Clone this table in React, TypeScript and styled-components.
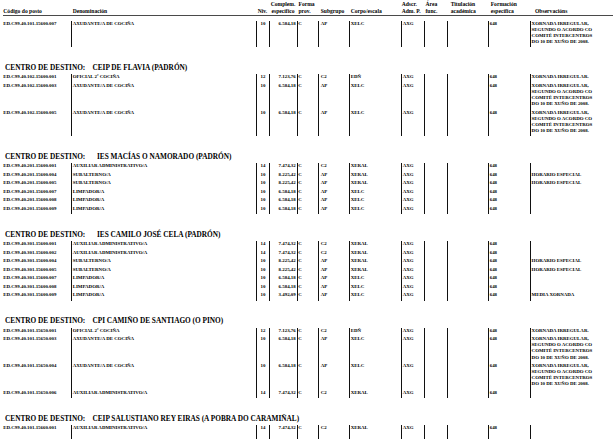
import React from "react";
import styled, { createGlobalStyle } from "styled-components";

const Global = createGlobalStyle`
  html, body { margin: 0; padding: 0; background: #fff; }
  body {
    width: 615px;
    height: 439px;
    overflow: hidden;
    font-family: "Liberation Serif", "DejaVu Serif", "Times New Roman", serif;
    color: #000;
  }
`;

const COLS =
  "71px 185px 13px 28px 21px 31px 52px 23px 23px 41px 42px 1fr";

type Align = "left" | "center" | "right";
type ColSpec = { align?: Align; pl?: number; pr?: number };

const HEAD_SPEC: ColSpec[] = [
  { pl: 3.3 },
  { pl: 1.7 },
  { align: "center" },
  { align: "center" },
  { pl: 1.5 },
  { pl: 2.7 },
  { pl: 1.7 },
  { pl: 0.7 },
  { pl: 1.5 },
  { pl: 3.7 },
  { pl: 2.7 },
  { pl: 5 },
];

const DATA_SPEC: ColSpec[] = [
  { pl: 3.3 },
  { pl: 0.7 },
  { align: "center" },
  { align: "right", pr: 1.3 },
  { pl: 0.3 },
  { pl: 1.7 },
  { pl: 0.7 },
  { pl: 0.7 },
  { pl: 0.6 },
  { pl: 0.6 },
  { pl: 0.7 },
  { pl: 0.6 },
];

const Page = styled.div`
  width: 615px;
`;

const HeaderGrid = styled.div`
  display: grid;
  grid-template-columns: ${COLS};
  padding-top: 1px;
  font-size: 5.6px;
  line-height: 7px;
  font-weight: bold;
`;

const HeaderCell = styled.div<{ $align?: Align; $pl?: number }>`
  height: 14px;
  display: flex;
  flex-direction: column;
  justify-content: flex-end;
  text-align: ${(p) => p.$align || "left"};
  padding-left: ${(p) => p.$pl ?? 0}px;
  white-space: nowrap;
`;

const HeaderRule = styled.div`
  height: 1px;
  margin-left: 3px;
  width: 610px;
  background: #4a4a4a;
`;

const TopBlock = styled.div`
  margin-top: 4.7px;
`;

const Table = styled.div``;

const Row = styled.div`
  display: grid;
  grid-template-columns: ${COLS};
  font-size: 4.9px;
  line-height: 6.1px;
  font-weight: bold;
`;

const Cell = styled.div<{
  $align?: Align;
  $pl?: number;
  $pr?: number;
  $first?: boolean;
  $h?: number;
}>`
  border-left: ${(p) => (p.$first ? "none" : "1px solid #111")};
  text-align: ${(p) => p.$align || "left"};
  padding-left: ${(p) => p.$pl ?? 0}px;
  padding-right: ${(p) => p.$pr ?? 0}px;
  padding-bottom: 2.4px;
  white-space: nowrap;
  overflow: hidden;
  min-height: ${(p) => p.$h ?? 0}px;
`;

const SectionTitle = styled.div`
  margin-top: 15.5px;
  margin-bottom: 2.5px;
  padding-left: 5px;
  height: 9px;
  font-family: "Liberation Serif", "DejaVu Serif", serif;
  font-size: 7.3px;
  line-height: 9px;
  font-weight: bold;
  white-space: nowrap;
`;

const TitleName = styled.span<{ $shift?: number }>`
  margin-left: ${(p) => 7.2 + (p.$shift ?? 0)}px;
`;

type Post = {
  code: string;
  name: string;
  niv: string;
  comp: string;
  sub: string;
  corpo: string;
  obs: string[];
};

const LONG_OBS = [
  "XORNADA IRREGULAR,",
  "SEGUNDO O ACORDO CO",
  "COMITÉ INTERCENTROS",
  "DO 10 DE XUÑO DE 2008.",
];

const cociña = (code: string): Post => ({
  code,
  name: "AXUDANTE/A DE COCIÑA",
  niv: "10",
  comp: "6.584,18",
  sub: "AP",
  corpo: "XELC",
  obs: LONG_OBS,
});
const oficial = (code: string): Post => ({
  code,
  name: "OFICIAL 2ª COCIÑA",
  niv: "12",
  comp: "7.123,76",
  sub: "C2",
  corpo: "EDÑ",
  obs: ["XORNADA IRREGULAR."],
});
const auxiliar = (code: string): Post => ({
  code,
  name: "AUXILIAR ADMINISTRATIVO/A",
  niv: "14",
  comp: "7.474,32",
  sub: "C2",
  corpo: "XERAL",
  obs: [],
});
const subalterno = (code: string): Post => ({
  code,
  name: "SUBALTERNO/A",
  niv: "10",
  comp: "8.225,42",
  sub: "AP",
  corpo: "XERAL",
  obs: ["HORARIO ESPECIAL"],
});
const limpador = (code: string, comp = "6.584,18", obs: string[] = []): Post => ({
  code,
  name: "LIMPADOR/A",
  niv: "10",
  comp,
  sub: "AP",
  corpo: "XELC",
  obs,
});

type Section = { name: string; shift?: number; posts: Post[]; tail?: boolean };

const TOP_POSTS: Post[] = [cociña("ED.C99.40.101.15600.007")];

const SECTIONS: Section[] = [
  {
    name: "CEIP DE FLAVIA (PADRÓN)",
    posts: [
      oficial("ED.C99.40.102.15600.001"),
      cociña("ED.C99.40.102.15600.003"),
      cociña("ED.C99.40.102.15600.005"),
    ],
  },
  {
    name: "IES MACÍAS O NAMORADO (PADRÓN)",
    shift: 4.5,
    posts: [
      auxiliar("ED.C99.40.201.15600.001"),
      subalterno("ED.C99.40.201.15600.004"),
      subalterno("ED.C99.40.201.15600.005"),
      limpador("ED.C99.40.201.15600.007"),
      limpador("ED.C99.40.201.15600.008"),
      limpador("ED.C99.40.201.15600.009"),
    ],
  },
  {
    name: "IES CAMILO JOSÉ CELA (PADRÓN)",
    shift: 4.5,
    posts: [
      auxiliar("ED.C99.40.301.15600.001"),
      auxiliar("ED.C99.40.301.15600.002"),
      subalterno("ED.C99.40.301.15600.004"),
      subalterno("ED.C99.40.301.15600.005"),
      limpador("ED.C99.40.301.15600.007"),
      limpador("ED.C99.40.301.15600.008"),
      limpador("ED.C99.40.301.15600.009", "3.492,09", ["MEDIA XORNADA"]),
    ],
  },
  {
    name: "CPI CAMIÑO DE SANTIAGO (O PINO)",
    posts: [
      oficial("ED.C99.40.101.15650.001"),
      cociña("ED.C99.40.101.15650.003"),
      cociña("ED.C99.40.101.15650.004"),
      auxiliar("ED.C99.40.101.15650.006"),
    ],
  },
  {
    name: "CEIP SALUSTIANO REY EIRAS (A POBRA DO CARAMIÑAL)",
    posts: [auxiliar("ED.C99.40.101.15660.001")],
    tail: true,
  },
];

const HEAD_LABELS: [string, string][] = [
  ["", "Código do posto"],
  ["", "Denominación"],
  ["", "Niv."],
  ["Complem.", "específico"],
  ["Forma", "prov."],
  ["", "Subgrupo"],
  ["", "Corpo/escala"],
  ["Adscr.", "Adm. P."],
  ["Área", "func."],
  ["Titulación", "académica"],
  ["Formación", "específica"],
  ["", "Observacións"],
];

function Header() {
  return (
    <>
      <HeaderGrid>
        {HEAD_LABELS.map(([a, b], i) => (
          <HeaderCell key={i} $align={HEAD_SPEC[i].align} $pl={HEAD_SPEC[i].pl}>
            {a && <span>{a}</span>}
            <span>{b}</span>
          </HeaderCell>
        ))}
      </HeaderGrid>
      <HeaderRule />
    </>
  );
}

function PostRow({ post }: { post: Post }) {
  const values: React.ReactNode[] = [
    post.code,
    post.name,
    post.niv,
    post.comp,
    "C",
    post.sub,
    post.corpo,
    "AXG",
    "",
    "",
    "648",
    post.obs.map((l, i) => <div key={i}>{l}</div>),
  ];
  return (
    <Row>
      {values.map((v, i) => (
        <Cell
          key={i}
          $first={i === 0}
          $align={DATA_SPEC[i].align}
          $pl={DATA_SPEC[i].pl}
          $pr={DATA_SPEC[i].pr}
        >
          {v}
        </Cell>
      ))}
    </Row>
  );
}

function TailRow() {
  return (
    <Row>
      {DATA_SPEC.map((_, i) => (
        <Cell key={i} $first={i === 0} $h={10} />
      ))}
    </Row>
  );
}

export default function App() {
  return (
    <Page>
      <Global />
      <Header />
      <TopBlock>
        <Table>
          {TOP_POSTS.map((p) => (
            <PostRow key={p.code} post={p} />
          ))}
        </Table>
      </TopBlock>
      {SECTIONS.map((s) => (
        <React.Fragment key={s.name}>
          <SectionTitle>
            CENTRO DE DESTINO:<TitleName $shift={s.shift}>{s.name}</TitleName>
          </SectionTitle>
          <Table>
            {s.posts.map((p) => (
              <PostRow key={p.code} post={p} />
            ))}
            {s.tail && <TailRow />}
          </Table>
        </React.Fragment>
      ))}
    </Page>
  );
}
